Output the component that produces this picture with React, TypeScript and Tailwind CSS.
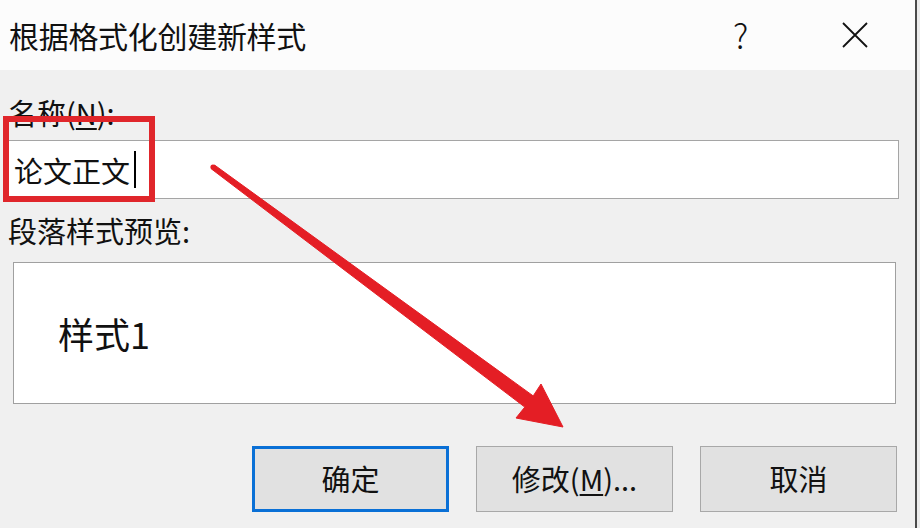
import React from "react";

const font = { fontFamily: '"Noto Sans CJK SC", "Noto Sans", sans-serif' };

export default function App() {
  return (
    <div
      className="relative flex w-[920px] h-[528px] overflow-hidden bg-[#f0f0f0] text-[#111]"
      style={font}
    >
      <div className="flex flex-col w-[915px] h-full">
        {/* Title bar */}
        <div className="flex items-center h-[70px] bg-[#fcfcfc] shrink-0">
          <div className="pl-[9px] text-[30px] leading-[36px] tracking-[-0.3px] w-[733px] shrink-0">
            根据格式化创建新样式
          </div>
          <div className="w-[108px] shrink-0 text-[34px] leading-[40px] font-light">?</div>
          <svg width="28" height="28" viewBox="0 0 28 28" className="shrink-0">
            <path d="M2 2 L26 26 M26 2 L2 26" stroke="#111" strokeWidth="1.8" fill="none" />
          </svg>
        </div>

        {/* Body */}
        <div className="flex flex-col flex-1 bg-[#f0f0f0] pl-[8px]">
          <div className="h-[70px] pt-[24px] text-[29px] leading-[36px]">
            名称(<span className="underline underline-offset-[3px]">N</span>):
          </div>
          <div className="flex items-center h-[59px] w-[891px] bg-white border border-[#a5a5a5] pl-[5px]">
            <span className="text-[29px] leading-[36px]">论文正文</span>
            <span className="ml-[4px] w-[2px] h-[37px] bg-black"></span>
          </div>
          <div className="mt-[13px] text-[29px] leading-[36px]">段落样式预览:</div>
          <div className="mt-[14px] ml-[5px] flex items-center h-[142px] w-[883px] bg-white border border-[#a0a0a0] pl-[44px]">
            <span className="text-[36px] leading-[44px]">样式1</span>
          </div>
          <div className="flex mt-[42px] h-[66px] pl-[244px] gap-[27px]">
            <div className="flex items-center justify-center w-[197px] h-[66px] bg-[#e1e1e1] border-[3px] border-[#0a70d6] text-[29px]">
              确定
            </div>
            <div className="flex items-center justify-center w-[197px] h-[66px] bg-[#e1e1e1] border border-[#a8a8a8] text-[29px]">
              修改(<span className="underline underline-offset-[3px]">M</span>)...
            </div>
            <div className="flex items-center justify-center w-[197px] h-[66px] bg-[#e1e1e1] border border-[#a8a8a8] text-[29px]">
              取消
            </div>
          </div>
        </div>
      </div>
      <div className="w-[2px] h-full bg-[#4a4a4a]"></div>
      <div className="flex-1 h-full bg-[#ececec]"></div>

      {/* Red annotation box */}
      <div className="absolute left-[3px] top-[116px] w-[152px] h-[86px] border-[6px] border-[#e0262b] pointer-events-none"></div>

      {/* Red arrow */}
      <svg
        className="absolute inset-0 pointer-events-none"
        width="920"
        height="528"
        viewBox="0 0 920 528"
      >
        <polygon
          points="214.5,165 533.2,395.9 541,384 563,427 516,418 524.8,407.1 211.5,169"
          fill="#e41e25"
          stroke="#e41e25"
          strokeWidth="1"
          strokeLinejoin="round"
        />
        <circle cx="213" cy="167" r="2.6" fill="#e41e25" />
      </svg>
    </div>
  );
}
